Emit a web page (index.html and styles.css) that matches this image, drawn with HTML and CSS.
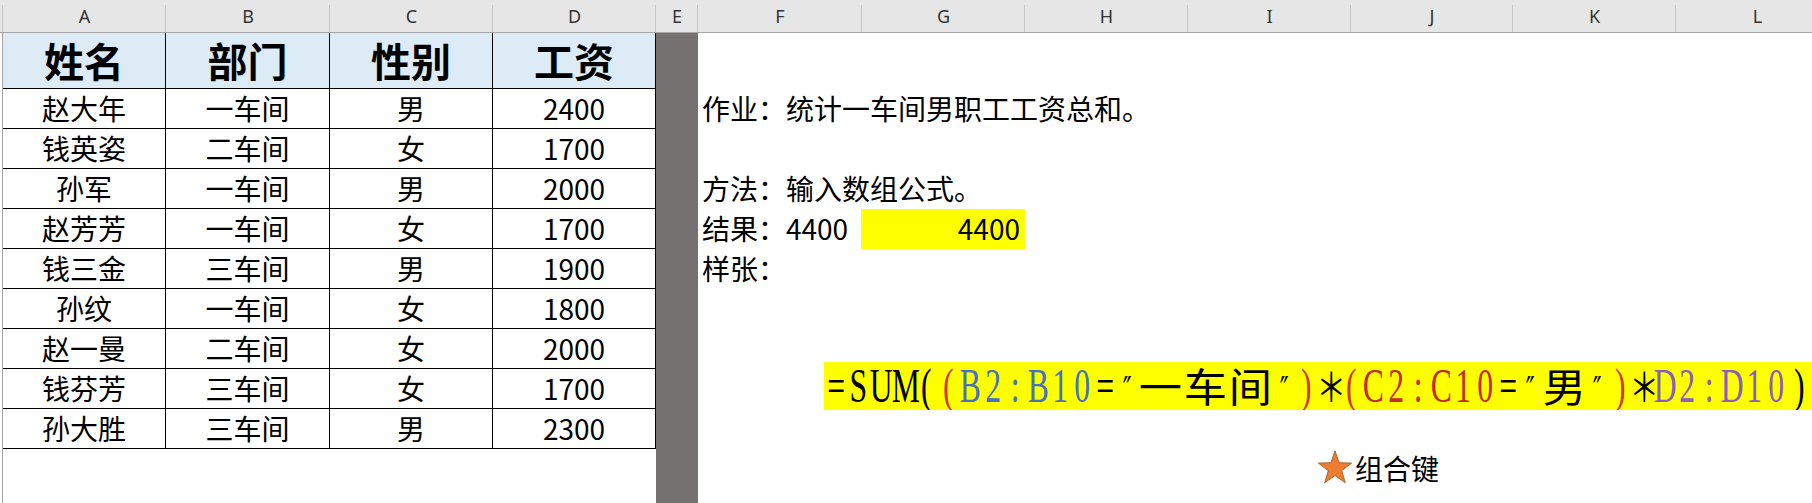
FILE: index.html
```html
<!DOCTYPE html>
<html lang="zh-CN">
<head>
<meta charset="utf-8">
<title>数组公式</title>
<link rel="stylesheet" href="styles.css">
</head>
<body>
<div class="sheet">
  <div class="colhdr">
    <div class="ch cf"></div>
    <div class="ch wa">A</div>
    <div class="ch wb">B</div>
    <div class="ch wa">C</div>
    <div class="ch wa">D</div>
    <div class="ch we">E</div>
    <div class="ch wb">F</div>
    <div class="ch wa">G</div>
    <div class="ch wa">H</div>
    <div class="ch wa">I</div>
    <div class="ch wj">J</div>
    <div class="ch wa">K</div>
    <div class="ch wa">L</div>
  </div>
  <div class="main">
    <div class="frame"></div>
    <div class="table">
      <div class="th">姓名</div><div class="th">部门</div><div class="th">性别</div><div class="th">工资</div>
      <div class="td">赵大年</div><div class="td">一车间</div><div class="td">男</div><div class="td">2400</div>
      <div class="td">钱英姿</div><div class="td">二车间</div><div class="td">女</div><div class="td">1700</div>
      <div class="td">孙军</div><div class="td">一车间</div><div class="td">男</div><div class="td">2000</div>
      <div class="td">赵芳芳</div><div class="td">一车间</div><div class="td">女</div><div class="td">1700</div>
      <div class="td">钱三金</div><div class="td">三车间</div><div class="td">男</div><div class="td">1900</div>
      <div class="td">孙纹</div><div class="td">一车间</div><div class="td">女</div><div class="td">1800</div>
      <div class="td">赵一曼</div><div class="td">二车间</div><div class="td">女</div><div class="td">2000</div>
      <div class="td">钱芬芳</div><div class="td">三车间</div><div class="td">女</div><div class="td">1700</div>
      <div class="td">孙大胜</div><div class="td">三车间</div><div class="td">男</div><div class="td">2300</div>
    </div>
    <div class="egap"></div>
    <div class="right">
      <div class="note r2">作业：统计一车间男职工工资总和。</div>
      <div class="note r4">方法：输入数组公式。</div>
      <div class="note r5">结果：4400</div>
      <div class="yellow">4400</div>
      <div class="note r6">样张：</div>
      <div class="star-cell">
        <svg class="star" width="36" height="34" viewBox="0 0 36 34"><polygon points="18,1 22.1,12.8 34.6,13.1 24.66,20.66 28.3,32.7 18,25.5 7.7,32.7 11.34,20.66 1.4,13.1 13.9,12.8" fill="#ed7d31" stroke="#b0612a" stroke-width="1"/></svg>
      </div>
      <div class="note key">组合键</div>
    </div>
  </div>
  <div class="formula"><span class="k"><span class="c">=</span><span class="c">S</span><span class="c">U</span><span class="c">M</span><span class="c">(</span></span><span class="p"><span class="c">(</span></span><span class="b"><span class="c">B</span><span class="c">2</span><span class="c">:</span><span class="c">B</span><span class="c">1</span><span class="c">0</span></span><span class="k"><span class="c">=</span><span class="c q">″</span><span class="w">一</span><span class="w">车</span><span class="w">间</span><span class="c q">″</span></span><span class="p"><span class="c">)</span></span><span class="k"><span class="c a">＊</span></span><span class="p"><span class="c">(</span></span><span class="r"><span class="c">C</span><span class="c">2</span><span class="c">:</span><span class="c">C</span><span class="c">1</span><span class="c">0</span></span><span class="k"><span class="c">=</span><span class="c q">″</span><span class="w">男</span><span class="c q">″</span></span><span class="p"><span class="c">)</span></span><span class="k"><span class="c a">＊</span></span><span class="v"><span class="c">D</span><span class="c">2</span><span class="c">:</span><span class="c">D</span><span class="c">1</span><span class="c">0</span></span><span class="k"><span class="c">)</span></span></div>
</div>
</body>
</html>
```

FILE: styles.css
```css
* { box-sizing: border-box; margin: 0; padding: 0; }
html, body { width: 1812px; height: 503px; overflow: hidden; background: #fff; }
body { font-family: "Noto Sans CJK SC", "Noto Sans", sans-serif; color: #000; }

.sheet { position: relative; width: 1812px; height: 503px; overflow: hidden; }

/* column header band */
.colhdr { display: flex; height: 33px; background: #e6e6e6; border-bottom: 1px solid #a6a6a6; }
.ch {
  flex: none; height: 32px; font-family: "Noto Sans", sans-serif; font-size: 18px; line-height: 32px;
  text-align: center; color: #333;
  background: linear-gradient(#c6c6c6, #c6c6c6) no-repeat right bottom / 1px 27px;
}
.cf { width: 3px; }
.wa { width: 163px; }
.wb { width: 164px; }
.we { width: 42px; }
.wj { width: 162px; }

/* main sheet area */
.main { display: flex; height: 470px; }
.frame { flex: none; width: 3px; border-right: 1px solid #a6a6a6; }

.table {
  flex: none; display: grid; align-content: start;
  grid-template-columns: 163px 164px 163px 163px;
  grid-template-rows: 56px repeat(9, 40px);
}
.th {
  background: #ddebf7; border-right: 1px solid #000; border-bottom: 1px solid #000;
  font-size: 40px; font-weight: bold; line-height: 55px; text-align: center;
}
.td {
  border-right: 1px solid #000; border-bottom: 1px solid #000;
  font-size: 28px; line-height: 39px; text-align: center;
}

.egap { flex: none; width: 42px; background: #767171; }

.right {
  flex: none; display: grid; align-content: start;
  grid-template-columns: 164px 163px 163px 163px 162px 163px 163px;
  grid-template-rows: 56px repeat(11, 40px);
}
.note { grid-column: 1; font-size: 28px; line-height: 39px; padding-left: 4px; white-space: nowrap; }
.r2 { grid-row: 2; }
.r4 { grid-row: 4; }
.r5 { grid-row: 5; }
.r6 { grid-row: 6; }
.yellow {
  grid-column: 2; grid-row: 5; margin-left: -1px; background: #ffff00;
  font-size: 28px; line-height: 39px; text-align: right; padding-right: 5px;
}
.star-cell { grid-column: 4; grid-row: 11; display: flex; justify-content: flex-end; align-items: flex-start; margin-right: -2px; padding-top: 1px; }
.star { display: block; }
.key { grid-column: 5; grid-row: 11; }

/* floating formula picture */
.formula {
  position: absolute; left: 824px; top: 362px; width: 1000px; height: 48px;
  background: #ffff00; white-space: nowrap; overflow: hidden; padding-left: 1px;
  font-family: "Liberation Serif", serif; font-size: 48px; line-height: 48px;
}
.c { display: inline-block; width: 34.4px; margin: 0 -6px; text-align: center; transform: scaleX(0.66); }
.q { font-family: "DejaVu Serif", serif; font-size: 36px; line-height: 40px; }
.a { font-family: "Noto Sans CJK SC", sans-serif; font-size: 40px; line-height: 40px; transform: scaleX(0.75); }
.w { display: inline-block; width: 44.8px; text-align: center; font-family: "Noto Sans CJK SC", sans-serif; font-size: 40px; line-height: 40px; transform: scaleX(1.08); }
.k { color: #000; }
.p { color: #d03a2c; }
.b { color: #4472c4; }
.r { color: #c42b2b; }
.v { color: #8b5cc2; }
```
